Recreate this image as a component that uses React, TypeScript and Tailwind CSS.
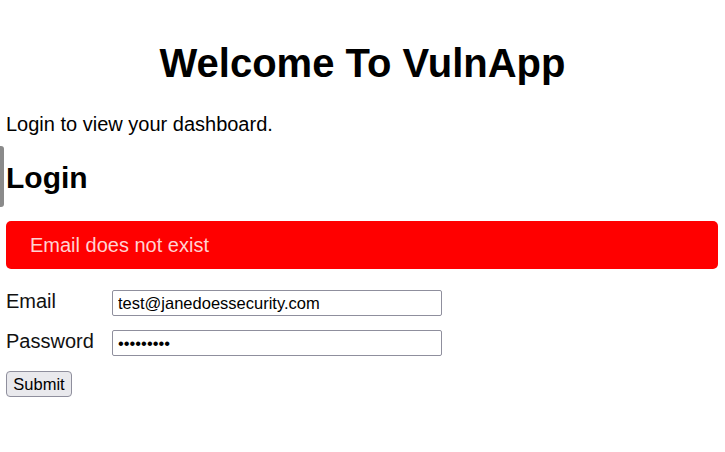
import React, { useState } from 'react';

const App: React.FC = () => {
  const [email, setEmail] = useState('test@janedoessecurity.com');
  const [password, setPassword] = useState('123456789');

  return (
    <div className="relative min-h-[452px] w-full bg-white px-[6px] text-black font-['Liberation_Sans',Arial,sans-serif]">
      {/* left edge tab */}
      <div className="absolute left-0 top-[146px] h-[61px] w-[4px] rounded-r-[3px] bg-[#8a8a8a]" />

      <h1 className="pt-[40px] text-center text-[40px] font-bold leading-[46px]">Welcome To VulnApp</h1>

      <p className="mt-[27px] text-[20px] leading-[23px]">Login to view your dashboard.</p>

      <h2 className="mt-[25px] text-[30px] font-bold leading-[34px]">Login</h2>

      {/* Error alert */}
      <div className="mt-[26px] w-[712px] rounded-[5px] bg-[#ff0000] px-[24px] py-[12px] text-[20px] leading-[24px] text-[#ffd2d2]">
        Email does not exist
      </div>

      <form className="mt-[21px] flex flex-col" onSubmit={e => e.preventDefault()}>
        <div className="flex items-center">
          <label className="w-[106px] pb-[3px] text-[20px] leading-[23px] text-[#111]">Email</label>
          <input
            type="text"
            value={email}
            onChange={e => setEmail(e.target.value)}
            className="h-[26px] w-[330px] rounded-[2px] border border-[#8f8f9d] px-[5px] text-[16.5px] text-black outline-none"
          />
        </div>
        <div className="mt-[14px] flex items-center">
          <label className="w-[106px] pb-[3px] text-[20px] leading-[23px] text-[#111]">Password</label>
          <input
            type="password"
            value={password}
            onChange={e => setPassword(e.target.value)}
            className="h-[26px] w-[330px] rounded-[2px] border border-[#8f8f9d] px-[5px] text-[16.5px] text-black outline-none"
          />
        </div>
        <div className="mt-[15px]">
          <button
            type="submit"
            className="h-[26px] w-[66px] rounded-[4px] border border-[#8f8f9d] bg-[#e9e9ed] text-[16.5px] leading-[20px] text-black"
          >
            Submit
          </button>
        </div>
      </form>
    </div>
  );
};

export default App;
